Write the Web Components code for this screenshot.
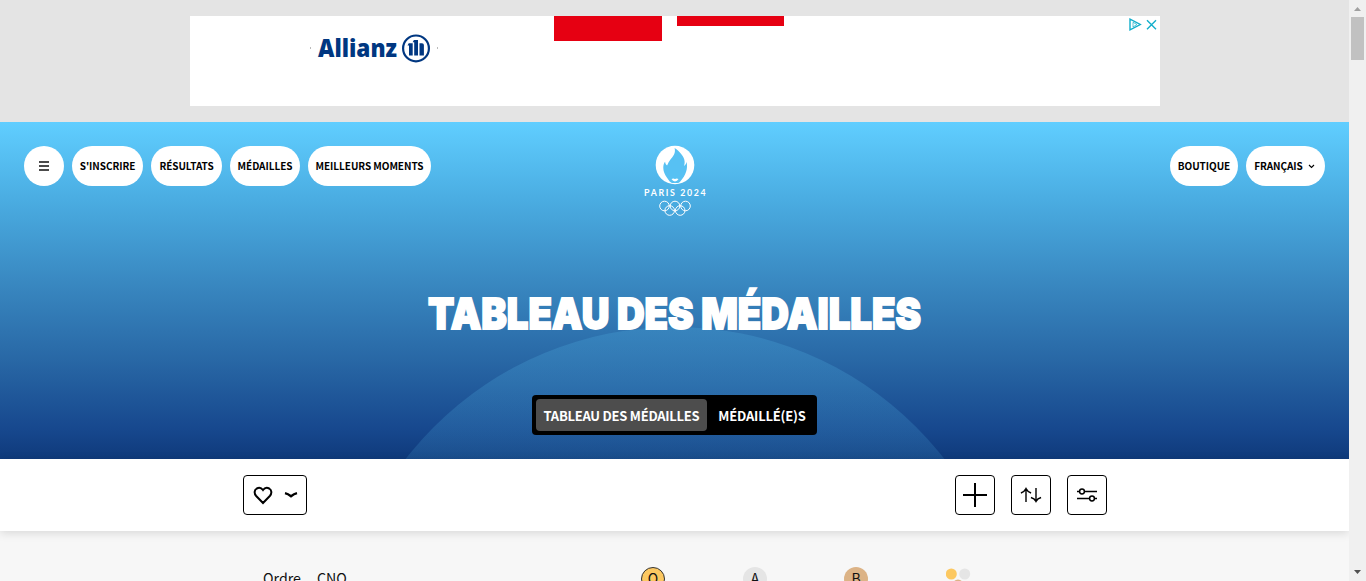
<!DOCTYPE html>
<html lang="fr">
<head>
<meta charset="utf-8">
<title>Tableau des médailles</title>
<style>
html,body{margin:0;height:581px;overflow:hidden}
body{font-family:"Noto Sans CJK SC","Noto Sans",sans-serif;color:#000}
</style>
</head>
<body>
<medals-app></medals-app>
<script>
const define = (name, html) => customElements.define(name, class extends HTMLElement {
  constructor() {
    super();
    const t = document.createElement('template');
    t.innerHTML = html;
    this.attachShadow({mode: 'open'}).append(t.content.cloneNode(true));
  }
});

define('nav-pill', `<style>
:host{display:flex;box-sizing:border-box;height:40px;border-radius:20px;background:#fff;align-items:center;justify-content:center;font-size:10px;font-weight:700;line-height:16px;letter-spacing:-.06px;white-space:nowrap;flex:none}
</style><slot></slot>`);

define('tool-button', `<style>
:host{display:flex;box-sizing:border-box;width:40px;height:40px;border:1px solid #000;border-radius:4px;background:#fff;align-items:center;justify-content:center;flex:none}
</style><slot></slot>`);

define('medal-badge', `<style>
:host{display:block;box-sizing:border-box;width:24px;height:24px;border-radius:50%;text-align:center;font-size:14px;line-height:23px;flex:none}
</style><slot></slot>`);

define('allianz-logo', `<style>:host{display:block;width:130px;height:30px}svg{display:block;overflow:visible}</style>
<svg width="130" height="30" viewBox="0 0 130 30">
<text x="8" y="22.500" textLength="79" lengthAdjust="spacingAndGlyphs" font-family="'Open Sans','Noto Sans',sans-serif" font-size="24" font-weight="800" fill="#003781">Allianz</text>
<g fill="#003781"><circle cx="106" cy="14.4" r="12.9" fill="none" stroke="#003781" stroke-width="2.2"/>
<path d="M99 21.500V11.500h-1.500l1.200-2.300h4v12.300zM104.200 21.500V8.300h-1.600l1.300-2.300h4.100v15.500zM109.500 21.500V9.200h2.500q1.900 0 1.900 1.900v10.400z"/></g>
<path d="M0 14h1M127 14h1" stroke="#777"/>
</svg>`);

define('ad-banner', `<style>
:host{display:flex;height:122px;box-sizing:border-box;padding:16px 189px 16px 190px;background:#e4e4e4}
.ad{display:grid;grid-template-columns:120px 244px 107.500px 15.500px 107px 1fr;width:970px;height:90px;background:#fff}
allianz-logo{grid-column:2;margin-top:18px}
.a,.b{background:#e60012;height:25px}.b{grid-column:5;height:10px}.a{grid-column:3}
.mark{grid-column:6;justify-self:end;padding:2px 2px}.mark svg{display:block}
</style><div class="ad"><allianz-logo></allianz-logo><div class="a"></div><div class="b"></div>
<div class="mark"><svg width="30" height="13" fill="none" stroke="#12aecb" stroke-width="1.4"><path d="M2 1.2L12.3 6.5 2 11.8z"/><path d="M5 4.3V9L9 6.5 5 4.3" stroke-width="1" opacity=".7"/><path d="M19 2.3l9 9M28 2.3l-9 9"/></svg></div></div>`);

define('games-logo', `<style>:host{display:block;width:64px;height:72px}svg{display:block}</style>
<svg width="64" height="72" viewBox="0 0 64 72">
<circle cx="32" cy="20" r="19.3" fill="#fff"/>
<path d="M26.7 36.5C24 32.5 20.5 29 20.3 23c-.1-3 .7-5.2 1.8-6.3.2 2 .8 3 2 3.700 1.700-4.500 5-7.400 6.800-10.600C32.200 7.300 32.100 5.200 31.600 3c5 3.400 9.800 8.500 10 13.500.1 2-.2 3.400-.7 4.600 1.400-.7 2.500-2.500 2.700-4.300C45 24 43 30 37.300 36.500c-.7.7-1.500 1.200-2.200 1.600h-6.200c-.8-.4-1.500-1-2.200-1.600z" fill="#57c1f3"/>
<path d="M28.500 34q1.800-.8 3.500 0 1.700-.8 3.500 0-1.300 2.400-3.500 2.400T28.500 34z" fill="#fff"/>
<text x="1" y="50.500" textLength="61.500" lengthAdjust="spacing" font-family="Lato,sans-serif" font-size="8.800" font-weight="700" fill="#fff">PARIS 2024</text>
<g fill="none" stroke="#fff" stroke-width="1"><circle cx="21.500" cy="61" r="4.800"/><circle cx="32" cy="61" r="4.800"/><circle cx="42.500" cy="61" r="4.800"/><circle cx="26.700" cy="65.500" r="4.800"/><circle cx="37.200" cy="65.500" r="4.800"/></g>
</svg>`);

define('view-switch', `<style>
:host{display:flex;box-sizing:border-box;width:285px;height:40px;padding:4px 0 4px 4px;background:#000;border-radius:4px;color:#fff;font-size:13px;font-weight:700;line-height:33px;white-space:nowrap;letter-spacing:-.26px}
.on{width:171px;height:32px;background:#4d4d4d;border-radius:4px}.off{width:110px;letter-spacing:-.2px}div{text-align:center;flex:none}
</style><div class="on">TABLEAU DES MÉDAILLES</div><div class="off">MÉDAILLÉ(E)S</div>`);

define('page-hero', `<style>
:host{display:flex;flex-direction:column;align-items:center;position:relative;height:337px;overflow:hidden;background:linear-gradient(#60ceff 0,#4baee3 22%,#3886bf 49%,#2867a5 71%,#17488e 91%,#0f3a7b 100%)}
:host::before{content:"";position:absolute;left:50%;top:205px;width:682px;height:682px;margin-left:-341px;border-radius:50%;background:linear-gradient(rgba(66,151,205,.45) 0,rgba(62,140,195,.24) 132px)}
nav{position:relative;display:grid;grid-template-columns:1fr 64px 1fr;width:100%;box-sizing:border-box;padding:24px 24px 0 24px;height:96px}
.group{display:flex;gap:8px}.right{justify-content:flex-end}
games-logo{margin:-1px 0 0 .5px}
h1{position:relative;margin:57px 0 0;height:70px}
h1 svg{display:block;overflow:visible}
view-switch{position:relative;margin-top:50px}
</style>
<nav><div class="group">
<nav-pill style="width:40px"><svg width="10" height="10"><path d="M0 1h10M0 5h10M0 9h10" stroke="#111" stroke-width="1.700"/></svg></nav-pill>
<nav-pill style="width:71px">S'INSCRIRE</nav-pill><nav-pill style="width:71px">RÉSULTATS</nav-pill><nav-pill style="width:70px">MÉDAILLES</nav-pill><nav-pill style="width:123px">MEILLEURS MOMENTS</nav-pill></div>
<games-logo></games-logo>
<div class="group right"><nav-pill style="width:68px">BOUTIQUE</nav-pill><nav-pill style="width:79px"><span style="margin-right:5px">FRANÇAIS</span><svg width="7" height="7" style="margin-right:2px"><path d="M1 2l2.500 2.500L6 2" fill="none" stroke="#000" stroke-width="1.100"/></svg></nav-pill></div></nav>
<h1><svg width="520" height="70" font-family="Inter,sans-serif" font-size="43" font-weight="900" fill="#fff" stroke="#fff" stroke-width="1.800" stroke-linejoin="miter"><text x="13" y="53.700" textLength="493" lengthAdjust="spacingAndGlyphs">TABLEAU DES MÉDAILLES</text></svg></h1>
<view-switch></view-switch>`);

define('filter-bar', `<style>
:host{display:flex;position:relative;box-sizing:border-box;height:72px;padding:16px 242px 16px 243px;background:#fff;box-shadow:0 2px 9px rgba(0,0,0,.13);justify-content:space-between}
.fav{width:64px;gap:11px}.actions{display:flex;gap:16px}svg{display:block;fill:none;stroke:#000}
</style>
<tool-button class="fav"><svg width="20" height="20" viewBox="0 0 20 20" stroke-width="2"><path d="M10 18L3.200 11C.8 8.400 1.300 5 3.800 3.500 6 2.300 8.500 3 10 5c1.500-2 4-2.700 6.200-1.500 2.500 1.500 3 4.900.6 7.500z"/></svg><svg width="14" height="8" viewBox="0 0 14 8"><path d="M1 2.200Q4 3 7 5.200 10 3 13 2.200" stroke-width="2.300"/></svg></tool-button>
<div class="actions"><tool-button><svg width="24" height="24"><path d="M0 12h24M12 0v24" stroke-width="2"/></svg></tool-button>
<tool-button><svg width="22" height="16" viewBox="0 0 22 16" stroke-width="1.400"><path d="M6 15V2M.9 6C3.500 5.200 5 3.500 6 1.600 7 3.500 8.500 5.200 11.100 6M16 1v13M10.900 10.500c2.600.7 4.100 2 5.100 3.900 1-1.900 2.500-3.200 5.100-3.900"/></svg></tool-button>
<tool-button><svg width="20" height="14" viewBox="0 0 20 14" stroke-width="1.500"><path d="M0 3.500h2.500M7.500 3.500H20M0 10.500h12.500M17.500 10.500H20"/><circle cx="5" cy="3.500" r="2.400"/><circle cx="15" cy="10.500" r="2.400"/></svg></tool-button></div>`);

define('medal-header', `<style>
:host{display:grid;grid-template-columns:54px 324px 102px 101px 102px 1fr;padding:36px 0 0 263px;height:50px;box-sizing:border-box;overflow:hidden;background:#f7f7f7;font-size:14.200px;line-height:22px;color:#111}
.t{height:22px;white-space:nowrap}
.gold{background:#fcc861;border:1px solid #333;line-height:21px}.silver{background:#e5e5e5}.bronze{background:#dcb386}
svg{display:block}
</style><span class="t">Ordre</span><span class="t">CNO</span><medal-badge class="gold">O</medal-badge><medal-badge class="silver">A</medal-badge><medal-badge class="bronze">B</medal-badge>
<svg width="26" height="24"><circle cx="5.300" cy="7" r="5.500" fill="#fcc861"/><circle cx="18.700" cy="7" r="5.500" fill="#e5e5e5"/><circle cx="12" cy="18" r="5.500" fill="#dcb386"/></svg>`);

define('scroll-rail', `<style>
:host{display:flex;flex-direction:column;align-items:center;width:17px;height:581px;background:#f0f0f0;position:relative;z-index:2}
.thumb{width:13px;height:43px;background:#c1c1c1;margin-bottom:auto}svg{display:block;width:17px;height:17px}
</style><svg><path d="M5 11L8.500 7 12 11z" fill="#a0a0a0"/></svg><div class="thumb"></div><svg><path d="M5 6h7L8.500 10z" fill="#505050"/></svg>`);

define('medals-app', `<style>
:host{display:grid;grid-template-columns:1349px 17px;width:1366px;height:581px;overflow:hidden}
main{display:flex;flex-direction:column;overflow:hidden}main>*{flex:none}
</style><main><ad-banner></ad-banner><page-hero></page-hero><filter-bar></filter-bar><medal-header></medal-header></main><scroll-rail></scroll-rail>`);
</script>
</body>
</html>
